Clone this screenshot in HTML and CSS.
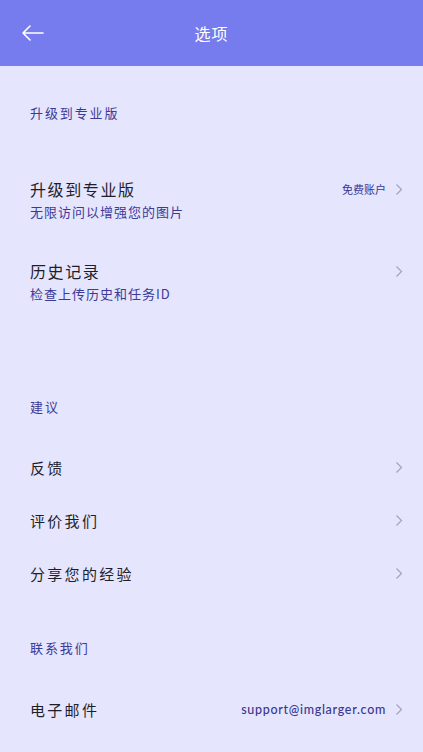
FILE: index.html
```html
<!DOCTYPE html>
<html lang="zh-CN">
<head>
<meta charset="utf-8">
<title>选项</title>
<link rel="stylesheet" href="styles.css">
</head>
<body>
<div class="page">
  <header class="topbar">
    <svg class="back" width="24" height="18" viewBox="0 0 24 18"><path d="M22 9H2M9 2L2 9l7 7" fill="none" stroke="#fff" stroke-width="1.6" stroke-linecap="round" stroke-linejoin="round"/></svg>
    <h1 class="title">选项</h1>
  </header>

  <div class="label label-1">升级到专业版</div>
  <div class="row row-double">
    <div class="texts">
      <div class="row-title">升级到专业版</div>
      <div class="row-sub">无限访问以增强您的图片</div>
    </div>
    <span class="value value-cn">免费账户</span>
    <svg class="chev" width="8" height="13" viewBox="0 0 8 13"><path d="M1.5 1.5l5 5-5 5" fill="none" stroke="#a3a3bd" stroke-width="1.2"/></svg>
  </div>
  <div class="row row-double">
    <div class="texts">
      <div class="row-title">历史记录</div>
      <div class="row-sub">检查上传历史和任务ID</div>
    </div>
    <svg class="chev" width="8" height="13" viewBox="0 0 8 13"><path d="M1.5 1.5l5 5-5 5" fill="none" stroke="#a3a3bd" stroke-width="1.2"/></svg>
  </div>

  <div class="label label-2">建议</div>
  <div class="row row-single">
    <div class="row-title wide">反馈</div>
    <svg class="chev" width="8" height="13" viewBox="0 0 8 13"><path d="M1.5 1.5l5 5-5 5" fill="none" stroke="#a3a3bd" stroke-width="1.2"/></svg>
  </div>
  <div class="row row-single">
    <div class="row-title wide">评价我们</div>
    <svg class="chev" width="8" height="13" viewBox="0 0 8 13"><path d="M1.5 1.5l5 5-5 5" fill="none" stroke="#a3a3bd" stroke-width="1.2"/></svg>
  </div>
  <div class="row row-single">
    <div class="row-title wide">分享您的经验</div>
    <svg class="chev" width="8" height="13" viewBox="0 0 8 13"><path d="M1.5 1.5l5 5-5 5" fill="none" stroke="#a3a3bd" stroke-width="1.2"/></svg>
  </div>

  <div class="label label-3">联系我们</div>
  <div class="row row-single">
    <div class="row-title wide">电子邮件</div>
    <span class="value value-mail">support@imglarger.com</span>
    <svg class="chev" width="8" height="13" viewBox="0 0 8 13"><path d="M1.5 1.5l5 5-5 5" fill="none" stroke="#a3a3bd" stroke-width="1.2"/></svg>
  </div>
</div>
</body>
</html>
```
FILE: styles.css
```css
html, body {
  margin: 0;
  padding: 0;
  background: #e5e5fe;
}
body {
  font-family: "Noto Sans CJK SC", "Noto Sans", sans-serif;
  color: #1e1e2a;
}
.page {
  width: 423px;
  min-height: 752px;
  background: #e5e5fe;
}
.topbar {
  height: 66px;
  background: #767bee;
  display: flex;
  align-items: center;
  justify-content: center;
  position: relative;
}
.back {
  position: absolute;
  left: 21px;
  top: 24px;
}
.title {
  margin: 0;
  font-size: 16px;
  font-weight: 400;
  color: #fff;
  letter-spacing: 1px;
  line-height: 20px;
}
.label {
  padding-left: 30px;
  font-size: 13px;
  line-height: 20px;
  color: #3c3a96;
  letter-spacing: 1.9px;
}
.label-1 { padding-top: 37px; padding-bottom: 36px; }
.label-2 { padding-top: 74px; padding-bottom: 24px; }
.label-3 { padding-top: 38px; padding-bottom: 25px; }
.row {
  display: flex;
  align-items: center;
  padding-left: 30px;
  padding-right: 20px;
}
.row-double { height: 82px; }
.row-single { height: 53px; }
.texts {
  flex: 1;
  display: flex;
  flex-direction: column;
  gap: 2px;
}
.row-title {
  font-size: 16px;
  line-height: 22px;
  letter-spacing: 1.6px;
  color: #1e1e2a;
}
.row-title.wide {
  flex: 1;
  letter-spacing: 2.3px;
  font-size: 15px;
}
.row-sub {
  font-size: 13px;
  line-height: 20px;
  color: #3c3a96;
  letter-spacing: 1px;
}
.value {
  color: #3a3690;
  margin-right: 9px;
}
.value-cn {
  font-size: 11px;
  line-height: 16px;
  margin-top: -22px;
}
.value-mail {
  font-family: "Lato", "Noto Sans", sans-serif;
  font-size: 12.5px;
  letter-spacing: 0.7px;
  font-weight: 500;
}
.chev {
  display: block;
  flex: none;
}
.row-double .chev { margin-top: -22px; }
```
